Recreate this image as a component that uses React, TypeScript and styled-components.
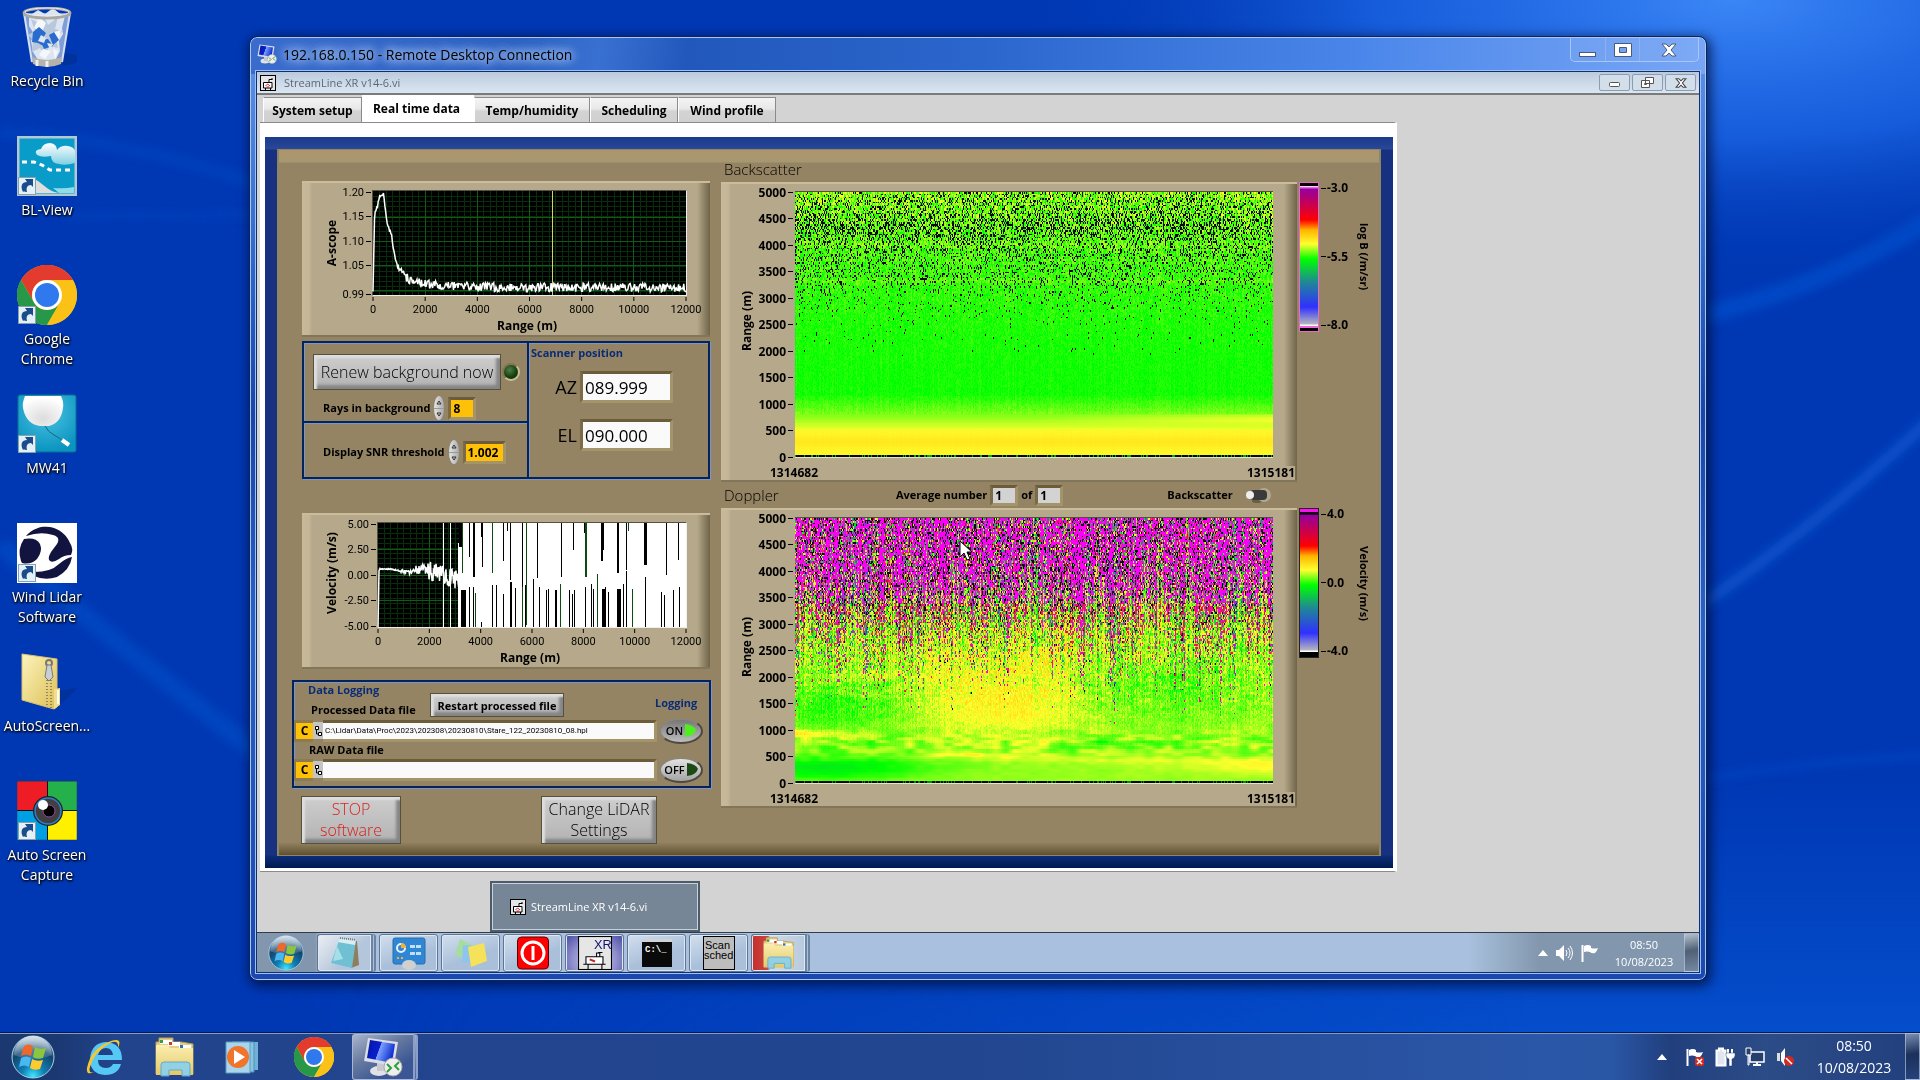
import React, { useLayoutEffect, useRef } from "react";
import styled, { createGlobalStyle, css } from "styled-components";

const UI = '"Open Sans", "Noto Sans", sans-serif';
const NARROW = 'Roboto, "Noto Sans", sans-serif';

const Global = createGlobalStyle`
  *, *::before, *::after { box-sizing: border-box; }
  html, body { margin: 0; background: #0038b4; }
  body { font-family: ${UI}; font-size: 12px; color: #000; }
  button, input { font-family: inherit; margin: 0; padding: 0; }
  svg { display: block; flex: none; }
`;

/* ---------- numeric helpers ---------- */

const hash = (x: number, y: number, s = 0) => {
  let n = Math.imul(x | 0, 374761393) ^ Math.imul(y | 0, 668265263) ^ Math.imul(s + 11, 2147483647);
  n = Math.imul(n ^ (n >>> 13), 1274126177);
  n = Math.imul(n ^ (n >>> 15), 2246822519);
  return ((n ^ (n >>> 16)) >>> 0) / 4294967296;
};
const ease = (t: number) => t * t * (3 - 2 * t);
const smooth = (x: number, y: number, s = 0) => {
  const xi = Math.floor(x);
  const yi = Math.floor(y);
  const fx = ease(x - xi);
  const fy = ease(y - yi);
  const a = hash(xi, yi, s) * (1 - fx) + hash(xi + 1, yi, s) * fx;
  const b = hash(xi, yi + 1, s) * (1 - fx) + hash(xi + 1, yi + 1, s) * fx;
  return a * (1 - fy) + b * fy;
};
const clamp = (v: number, lo = 0, hi = 1) => Math.max(lo, Math.min(hi, v));
const bump = (x: number, c: number, w: number) => Math.exp(-(((x - c) / w) ** 2));

const STOPS: [number, number[]][] = [
  [0, [195, 195, 195]],
  [0.13, [50, 50, 255]],
  [0.25, [35, 115, 180]],
  [0.37, [15, 190, 80]],
  [0.48, [0, 255, 0]],
  [0.59, [255, 255, 45]],
  [0.69, [255, 190, 0]],
  [0.77, [255, 0, 0]],
  [1, [150, 0, 165]],
];
const ramp = (v: number) => {
  const t = clamp(v);
  for (let i = 1; i < STOPS.length; i++) {
    if (t <= STOPS[i][0]) {
      const [p0, c0] = STOPS[i - 1];
      const [p1, c1] = STOPS[i];
      const f = (t - p0) / (p1 - p0);
      return c0.map((c, k) => c + (c1[k] - c) * f);
    }
  }
  return STOPS[STOPS.length - 1][1];
};
const BLACK = [8, 8, 8];
const MAGENTA = [250, 0, 245];

type Cell = (col: number, row: number, cols: number, rows: number) => number[];

const backscatterCell: Cell = (c, r, cols, rows) => {
  const h = 5000 * (1 - (r + 0.5) / rows);
  const x = c / cols;
  if (r === rows - 1) return hash(c, 3, 9) > 0.25 ? BLACK : [0, 170, 30];
  const steps: [number, number][] = [[0, 0], [1900, 0], [2100, 0.01], [2500, 0.015], [3000, 0.06], [3500, 0.16], [4000, 0.23], [4200, 0.36], [4400, 0.32], [5000, 0.17]];
  let p = 0;
  for (let i = 1; i < steps.length; i++)
    if (h <= steps[i][0] && h > steps[i - 1][0])
      p = steps[i - 1][1] + ((steps[i][1] - steps[i - 1][1]) * (h - steps[i - 1][0])) / (steps[i][0] - steps[i - 1][0]);
  p *= 0.75 + 0.5 * hash(1, r, 4);
  if (hash(c, r, 1) < p) return BLACK;
  let v = 0.485;
  if (h < 500) v = 0.6 + 0.022 * bump(h, 280, 120) + 0.004 * hash(c, 0, 2);
  else if (h < 820) v = 0.585 - ((h - 500) / 320) * 0.055 + 0.035 * bump(h, 720, 90) * clamp((x - 0.5) * 2);
  else if (h < 1150) v = 0.53 - ((h - 820) / 330) * 0.04;
  if (h > 820) {
    const t = clamp((h - 1300) / 3700);
    v += (hash(c, r, 7) - 0.42) * (0.025 + 0.12 * t * t) + t * t * 0.045 + (hash(c, 0, 5) - 0.5) * 0.014;
    v += 0.02 * bump(h, 3320, 40) + 0.014 * bump(h, 4000, 60);
  }
  return ramp(v);
};

const dopplerCell: Cell = (c, r, cols, rows) => {
  const h = 5000 * (1 - (r + 0.5) / rows);
  const x = c / cols;
  if (r === rows - 1) return hash(c, 3, 9) > 0.2 ? BLACK : [0, 140, 30];
  const colA = hash(c >> 1, 0, 21) * 0.6 + hash(c, 0, 24) * 0.4;
  const colB = smooth(c / 14, 0, 22);
  const t = clamp((h + (colA - 0.5) * 2200 + (colB - 0.5) * 500 - 2050) / 1650);
  if (hash(c, r, 31) < Math.pow(t, 1.1) * 0.94) {
    const k = hash(c, r, 32);
    const m = 0.42 + 0.18 * clamp((h - 2600) / 1400) + (hash(c >> 1, 1, 23) - 0.5) * 0.65;
    if (k < m) return h < 3400 && hash(c, r, 36) > 0.4 ? [225, 20, 110] : MAGENTA;
    if (k < m + 0.05 + 0.16 * clamp((h - 2700) / 1000)) return BLACK;
    return ramp(0.12 + 0.8 * (hash(c, r, 33) * 0.6 + hash(c, 4, 38) * 0.4));
  }
  let v = 0.545;
  v -= 0.09 * bump(x, 0.06, 0.22) * bump(h, 290, 230);
  v -= 0.05 * bump(x, 0.08, 0.16) * bump(h, 1450, 420);
  v += 0.065 * bump(x, 0.42, 0.17) * bump(h, 1550, 700);
  v += 0.03 * bump(x, 0.5, 0.35) * bump(h, 2500, 500);
  v += 0.05 * bump(x, 1, 0.2) * bump(h, 330, 160);
  v -= 0.05 * bump(x, 0.68, 0.12) * bump(h, 740, 50);
  v -= 0.03 * bump(x, 0.78, 0.16) * bump(h, 1900, 800);
  v += 0.06 * bump(x, 0, 0.1) * bump(h, 930, 60);
  v += 0.05 * bump(x, 0.38, 0.16) * bump(h, 520, 70);
  v += 0.03 * bump(x, 0.72, 0.2) * bump(h, 430, 60);
  const cloud = smooth(x * 14, h / 110, 41) * 0.4 + smooth(x * 50, h / 60, 42) * 0.6 - 0.5;
  v += cloud * (0.02 + 0.12 * bump(h, 720, 250) + 0.05 * clamp((h - 1000) / 800));
  const g = clamp((h - 500) / 2500);
  v += (hash(c, r, 34) - 0.5) * 0.16 * g + (hash(c, 2, 35) - 0.5) * 0.09 * g;
  return ramp(v);
};

/* ---------- icons ---------- */

const ShortcutMark = () => (
  <g>
    <rect x="1.5" y="41.5" width="17" height="17" fill="#e2f1f8" stroke="#8aa0ac" />
    <path d="M6 56C3 50 5 46 10 46l-2-3h8v8l-2-2c-4 0-5 3-4 7-2 0-3-1-4 0z" fill="#1c4b8c" />
  </g>
);
const ChromeArt = () => (
  <g>
    <circle cx="30" cy="30" r="30" fill="#fbc116" />
    <path d="M4 15A30 30 0 0 1 56 15H30A15 15 0 0 0 17 37.500Z" fill="#e33b2e" />
    <path d="M4 15 17 37.500A15 15 0 0 0 43 37.500L30 60A30 30 0 0 1 4 15Z" fill="#27984a" />
    <path d="M56 15A30 30 0 0 1 30 60L43 37.500A15 15 0 0 0 43 22.500L40 15Z" fill="#fbc116" />
    <circle cx="30" cy="30" r="15" fill="#fff" />
    <circle cx="30" cy="30" r="12" fill="#2f78ee" />
  </g>
);
const Chrome = ({ size, shortcut }: { size: number; shortcut?: boolean }) => (
  <svg width={size} height={size} viewBox="0 0 60 60"><ChromeArt />{shortcut && <ShortcutMark />}</svg>
);
const RecycleBin = () => (
  <svg width="60" height="60" viewBox="0 0 60 60">
    <ellipse cx="48" cy="52" rx="14" ry="6" fill="#002a86" opacity=".5" />
    <path d="M7 6 15 55Q30 62 45 55L53 6Z" fill="#a9bfe6" opacity=".75" />
    <path d="m12 9 9-6 7 4 8-6 6 5 6 3-3 12 1 6-4 7 1 10-4 8-9 4-9-3-5-8-2-11 3-7-5-8z" fill="#dde6f0" />
    <path d="m14 12 8 4 5-8 4 10 10-8-3 12 8 2-7 6 2 11-9-2-3 11-6-9-8 4 1-12-5-5 7-4z" fill="#b9c8da" />
    <path d="m22 10 7 6-4 9-8-4zM34 26l10-3-3 12zM26 42l8 2-6 8-6-4zM36 42l5 2-3 8z" fill="#f4f7fa" />
    <path d="m16 25 6-5 7 6-3 5 5 6-3 3-7-4-6-1zM32 28l5-3 5 8-6 5zM23 33l8-1 5 7-9 3z" fill="#2a6bd0" />
    <path d="m24 28 5 3-2 5-6-2zM30 36l6 1-3 5z" fill="#dde6f0" />
    <path d="M7 6 15 55M53 6 45 55" stroke="#d5e0f2" strokeWidth="2" />
    <ellipse cx="30" cy="6" rx="23" ry="5" fill="none" stroke="#a8a8a4" strokeWidth="3" />
    <ellipse cx="30" cy="5" rx="22" ry="4" fill="none" stroke="#eee" />
    <path d="M15 50Q30 56 45 50L44 57Q30 63 16 57Z" fill="#b5b3ac" />
    <path d="M20 53v6M30 54v6" stroke="#eee" strokeWidth="3" />
  </svg>
);
const BlView = () => (
  <svg width="60" height="60" viewBox="0 0 60 60">
    <defs><linearGradient id="cl" x1="0" y1="0" x2="0" y2="1"><stop offset="0" stopColor="#fff" /><stop offset="1" stopColor="#7fcfe2" /></linearGradient></defs>
    <rect x="1" y="1" width="58" height="58" fill="#0a9cc8" stroke="#b3c9d2" strokeWidth="3" />
    <path d="M20 19q-4-5 4-6 2-6 9-6 7 1 7 7 4-5 11-4 6 1 7 5v12q-10 3-16 1-8-1-8-8-9 2-14-1z" fill="url(#cl)" />
    <path d="M5 26h12l8 3 8 5h24" fill="none" stroke="#fff" strokeWidth="3" strokeDasharray="5 4" />
    <path d="M3 42q12-1 18 3l9 7q5 4 12 5H3z" fill="#dedede" />
    <path d="M36 52q12 1 21-1v6H42z" fill="#8fdbe9" />
    <ShortcutMark />
  </svg>
);
const Mw41 = () => (
  <svg width="60" height="60" viewBox="0 0 60 60">
    <defs>
      <radialGradient id="mwb" cx=".5" cy=".3" r=".7"><stop offset="0" stopColor="#4cc3e2" /><stop offset="1" stopColor="#0a94c0" /></radialGradient>
      <radialGradient id="mwo" cx=".5" cy=".75" r=".7"><stop offset="0" stopColor="#dcdcdc" /><stop offset="1" stopColor="#fff" /></radialGradient>
    </defs>
    <rect x="1" y="1" width="58" height="57" rx="2" fill="url(#mwb)" stroke="#0b6f92" />
    <path d="M8 2Q5 9 6 14 9 30 23 32h9Q44 29 46 14 47 8 44 2Z" fill="url(#mwo)" />
    <path d="M28 32Q31 38 37 41T47 48" fill="none" stroke="#166880" />
    <path d="m45 46 7 5" stroke="#fff" strokeWidth="4" />
    <ShortcutMark />
  </svg>
);
const WindLidar = () => (
  <svg width="60" height="60" viewBox="0 0 60 60">
    <rect width="60" height="60" fill="#fff" />
    <path d="M9 13A26 26 0 0 1 53 20Q57 26 54 32 47 32 42 36 36 40 33 38 30 36 34 29L40 21Q44 14 36 12 24 8 9 13Z" fill="#12133f" />
    <path d="M4 38Q0 26 7 16 19 14 23 21 26 28 20 36 14 42 5 40Z" fill="#12133f" />
    <path d="M17 49Q34 49 42 41 49 35 55 34 53 47 40 54 28 58 17 53Z" fill="#12133f" />
    <ShortcutMark />
  </svg>
);
const ZipFolder = () => (
  <svg width="60" height="60" viewBox="0 0 60 60">
    <defs><linearGradient id="zf" x1="0" y1="0" x2="1" y2="1"><stop offset="0" stopColor="#fdf4bd" /><stop offset="1" stopColor="#dcbf55" /></linearGradient></defs>
    <path d="M36 40 60 36Q50 48 38 56z" fill="#012b86" opacity=".55" />
    <path d="M5 2 40 7V55L37 57 5 48Z" fill="url(#zf)" stroke="#d8c06a" />
    <path d="M37 37l6-1v17l-6 4z" fill="#f2dd88" />
    <path d="M40 38h2v14h-2z" fill="#fff" />
    <path d="M30 28V56M34 28V57" stroke="#8c8568" strokeWidth="2" strokeDasharray="1 2" />
    <circle cx="32" cy="11" r="3" fill="none" stroke="#777" strokeWidth="2" />
    <path d="m30 13 4 0 2 12-4 4-4-4z" fill="#c9ced2" stroke="#747b80" />
  </svg>
);
const AutoCapture = () => (
  <svg width="60" height="60" viewBox="0 0 60 60">
    <path d="M0 0h30v30H0z" fill="#ee1c25" /><path d="M31 0h29v29H31z" fill="#24b04b" />
    <path d="M0 30h30v29H0z" fill="#009fe3" /><path d="M31 30h29v29H31z" fill="#fff000" />
    <path d="M30.500 0v59M0 29.500h60" stroke="#111" />
    <path d="M0 .5h60v58.500H0z" fill="none" stroke="#333" opacity=".5" />
    <circle cx="31" cy="30" r="15" fill="#222" /><circle cx="31" cy="30" r="13" fill="#404040" stroke="#2d7fd0" strokeWidth="1.500" />
    <circle cx="32" cy="30" r="6" fill="#000" stroke="#a044a0" />
    <circle cx="26" cy="24" r="5" fill="#fff" />
    <ShortcutMark />
  </svg>
);
const Orb = ({ size }: { size: number }) => (
  <svg width={size} height={size} viewBox="0 0 44 44">
    <defs>
      <radialGradient id="orb" cx=".5" cy=".95" r=".9"><stop offset="0" stopColor="#3fe6ff" /><stop offset=".3" stopColor="#0f7fb4" /><stop offset=".7" stopColor="#12456e" /><stop offset="1" stopColor="#7fa3bd" /></radialGradient>
      <linearGradient id="orbs" x1="0" y1="0" x2="0" y2="1"><stop offset="0" stopColor="#fff" stopOpacity=".65" /><stop offset="1" stopColor="#fff" stopOpacity=".1" /></linearGradient>
    </defs>
    <circle cx="22" cy="22" r="21" fill="url(#orb)" stroke="#a9cfe2" />
    <path d="M3 20A19 19 0 0 1 41 20Q22 28 3 20Z" fill="url(#orbs)" />
    <path d="M13 11q5-3 9 0l-2 10q-5-3-10 0z" fill="#f0672c" />
    <path d="M24 12q4 3 11 1l-3 10q-6 2-10-1z" fill="#8cc63e" />
    <path d="M10 23q5-3 10 0l-2 9q-5-3-10 0z" fill="#4cb6f0" />
    <path d="M21 24q5 3 11 1l-3 9q-6 2-10-1z" fill="#fdcb2e" />
  </svg>
);
const Explorer = ({ size }: { size: number }) => (
  <svg width={size} height={size} viewBox="0 0 40 40">
    <defs><linearGradient id="exf" x1="0" y1="0" x2="0" y2="1"><stop offset="0" stopColor="#fbeeb0" /><stop offset="1" stopColor="#e3c968" /></linearGradient></defs>
    <path d="M1 5h3V1h14v4h8l12 2v30H1z" fill="#e4cf84" stroke="#b8a050" />
    <path d="M5 3h12v4H5zM13 5h12v4H13zM24 8h12v3H24z" fill="#fff" />
    <path d="M5 3h3v3H5z" fill="#3a9a3e" /><path d="M14 5h3v3h-3z" fill="#cf3d20" /><path d="M25 8h3v3h-3z" fill="#2b72b8" />
    <path d="M1 8h12l2 3h23v27H1z" fill="url(#exf)" />
    <path d="M6 39V28q0-3 3-3h23q3 0 3 3v11h-8v-6H14v6z" fill="#8fd0ea" stroke="#5aa9cc" opacity=".95" />
  </svg>
);
const InternetExplorer = () => (
  <svg width="38" height="38" viewBox="0 0 38 38">
    <path d="M37 22H13q0 8 8 8 5 0 7-4h8q-3 11-16 11Q5 36 5 21 6 5 21 4q16 1 16 18zM13 17h15q-1-7-7-7t-8 7z" fill="#55c8f6" />
    <path d="M33 10Q38-1 26 3 6 10 2 30q-1 8 7 4Q3 36 5 29 9 14 25 5q9-4 8 5z" fill="#f7c82d" />
  </svg>
);
const MediaPlayer = () => (
  <svg width="34" height="34" viewBox="0 0 34 34">
    <path d="M12 2h21v28H12z" fill="#6fb2d6" /><path d="M7 2h22v30H7z" fill="#8ac4e2" stroke="#4f91b6" />
    <path d="M1 2h24v31H1z" fill="#a8d5ec" stroke="#5b9cc0" />
    <circle cx="13" cy="17" r="11" fill="#f0742a" /><path d="M9 10v14l11-7z" fill="#fff" />
  </svg>
);
const RemoteDesktop = ({ size }: { size: number }) => (
  <svg width={size} height={size} viewBox="0 0 40 40">
    <defs><linearGradient id="rds" x1="0" y1="0" x2="1" y2=".3"><stop offset="0" stopColor="#0414a0" /><stop offset=".5" stopColor="#0a20d0" /><stop offset=".52" stopColor="#7da2ff" /><stop offset="1" stopColor="#1232d0" /></linearGradient></defs>
    <ellipse cx="16" cy="34" rx="9" ry="5" fill="#e2e2e6" /><path d="M14 26h7l1 8h-8z" fill="#c8c8ce" />
    <path d="M5 1 35 5 31 29 1 24Z" fill="#d9dde6" /><path d="M7 3 32 7 29 26 4 21Z" fill="url(#rds)" />
    <circle cx="30" cy="30" r="9" fill="#eee" stroke="#aaa" />
    <path d="m24 27 4 4-4 4M36 25l-4 4 4 4" fill="none" stroke="#2f9e38" strokeWidth="2" />
  </svg>
);
const Notepad = () => (
  <svg width="32" height="32" viewBox="0 0 32 32">
    <path d="m12 2 16 2 2 24-8 3z" fill="#8f7d5c" /><path d="M11 1 27 3 23 31 2 26Z" fill="#6fc0d2" />
    <path d="M11 1 27 3 26 8 9 5Z" fill="#d8eef2" /><path d="M11 1 27 3" stroke="#777" strokeWidth="2" strokeDasharray="1 1" />
    <path d="M8 9 14 22 4 24Z" fill="#a7dfe8" />
  </svg>
);
const ControlPanel = () => (
  <svg width="34" height="34" viewBox="0 0 34 34">
    <rect x="1" y="2" width="32" height="26" rx="2" fill="#2f86d4" stroke="#2a6ca8" />
    <circle cx="9" cy="12" r="4" fill="none" stroke="#e6f2fb" strokeWidth="2" /><path d="M9 7a5 5 0 0 1 5 5H9z" fill="#f5b131" />
    <path d="M18 9h5v3h-5zM24 9h5v3h-5zM18 16h5v3h-5zM24 16h5v3h-5z" fill="#bfe0f8" /><path d="M5 21h2v2H5zM9 21h2v2H9z" fill="#f5b131" /><ellipse cx="17" cy="29" rx="7" ry="5" fill="#d0d0d0" />
  </svg>
);
const StickyNotes = () => (
  <svg width="34" height="30" viewBox="0 0 34 30">
    <path d="m6 1 16 8-4 14L1 17Z" fill="#a6dc9c" /><path d="m9 7 17 1-1 17-17-1z" fill="#8ec5ee" /><path d="m14 9 16-4 3 18-16 6z" fill="#f6e15a" />
  </svg>
);
const PowerTile = () => (
  <svg width="32" height="34" viewBox="0 0 32 34">
    <rect x=".5" y="1" width="31" height="32" rx="4" fill="#f00" stroke="#600" /><circle cx="16" cy="17" r="11" fill="none" stroke="#fff" strokeWidth="3" /><path d="M16 10v14" stroke="#fff" strokeWidth="3" />
  </svg>
);
const ViGlyph = ({ size, label }: { size: number; label?: boolean }) => (
  <svg width={size} height={size} viewBox="0 0 32 32">
    <rect x={label ? 0.5 : 1} y={label ? 0.5 : 1} width={label ? 31 : 30} height={label ? 31 : 30} fill="#e6e6e6" stroke="#000" strokeWidth={label ? 1 : 2} />
    {label ? (
      <>
        <text x="15" y="12" fontFamily="Liberation Sans" fontSize="12" fill="#10107a">XR</text>
        <path d="M7.500 19.500h16v7h-16zM5 26.500h5M21 26.500h5M9.500 31v-4M22.500 31v-4M17.500 19v-3h3v3M19 15.500h4" fill="#fff" stroke="#000" /><path d="m11 22 5 2" stroke="#c22" strokeWidth="2" />
      </>
    ) : (
      <>
        <path d="M7 15h17v11H7zM11 31v-5M21 31v-5M18 14V9h7M24 9V6" fill="#fff" stroke="#000" strokeWidth="2" /><path d="m11 22 4-4 5 4M13 24h5" stroke="#c22" strokeWidth="2" fill="none" />
      </>
    )}
  </svg>
);
const Cmd = () => (
  <svg width="30" height="28" viewBox="0 0 30 28">
    <rect width="30" height="28" fill="#0a0a0a" /><path d="M0 0h30v3H0z" fill="#cfd3d8" />
    <text x="3" y="13" fontFamily="Liberation Mono" fontWeight="700" fontSize="9" fill="#fff">C:\_</text>
  </svg>
);
const ScanSched = () => (
  <svg width="32" height="34" viewBox="0 0 32 34">
    <rect x=".5" y=".5" width="31" height="33" fill="#bdbdbd" stroke="#000" />
    <text x="2" y="13" fontFamily="Liberation Sans" fontSize="11" fill="#000">Scan</text>
    <text x="1" y="23" fontFamily="Liberation Sans" fontSize="11" fill="#000">sched</text>
  </svg>
);
const TrayArrow = () => <svg width="10" height="6" viewBox="0 0 10 6"><path d="M0 6 5 0l5 6z" fill="#fff" /></svg>;
const TrayFlag = ({ error }: { error?: boolean }) => (
  <svg width="20" height="20" viewBox="0 0 20 20">
    <path d="M2.500 2v17" stroke="#fff" strokeWidth="2" /><path d="M4 3q4-2 7 0v2q3 1 7 0-1 3-3 5-3 1-5-1-3-1-6 0z" fill="#fff" />
    {error && <><rect x="10" y="10" width="9" height="9" rx="2" fill="#d22a22" /><path d="m12 12 5 5M17 12l-5 5" stroke="#fff" strokeWidth="1.500" /></>}
  </svg>
);
const TrayBattery = () => (
  <svg width="20" height="20" viewBox="0 0 20 20"><path d="M1.500 3.500H4v-2h4v2h2.500v15h-9z" fill="#dfe6f0" stroke="#fff" strokeWidth="2" /><path d="M13 2v4M17 2v4" stroke="#fff" strokeWidth="2" /><path d="M11 6h9v3q-1 3-3 3v7h-3v-7q-2 0-3-3z" fill="#fff" stroke="#26406e" strokeWidth=".5" /></svg>
);
const TrayNetwork = () => (
  <svg width="20" height="20" viewBox="0 0 20 20"><path d="M5 5h14v10H5z" fill="#26406e" stroke="#fff" strokeWidth="1.500" /><path d="M8 17h8v2H8zM11 15h2v2h-2z" fill="#fff" /><path d="M1 1h5v7H1zM3 8h1v10H3z" fill="#26406e" stroke="#fff" /></svg>
);
const TrayVolume = ({ muted }: { muted?: boolean }) => (
  <svg width="20" height="20" viewBox="0 0 20 20">
    {muted ? (
      <><path d="M2 6h3v8H2z" fill="#ddd" /><path d="M6 6l4-5v18l-4-5z" fill="#fff" /><circle cx="14" cy="14" r="5" fill="#d22a22" /><path d="m11 11 6 6" stroke="#fff" strokeWidth="1.500" /></>
    ) : (
      <><path d="M2 7h3l5-5v16l-5-5H2z" fill="#fff" /><path d="M12 7q2 3 0 6M14 5q4 5 0 10M16 3q5 7 0 14" fill="none" stroke="#fff" /></>
    )}
  </svg>
);

const Wallpaper = styled.svg`
  position: absolute;
  inset: 0;
  width: 100%;
  height: 100%;
`;

/* ---------- desktop shell ---------- */

const Desktop = styled.div`
  position: relative;
  display: flex;
  flex-direction: column;
  min-height: 100vh;
  overflow: hidden;
  background: #0038b4;
`;
const Workspace = styled.main`
  position: relative;
  flex: 1;
`;
const IconColumn = styled.nav`
  position: relative;
  display: grid;
  grid-auto-rows: 129px;
  width: 94px;
  padding-top: 7px;
`;
const DesktopIcon = styled.button`
  display: flex;
  flex-direction: column;
  align-items: center;
  gap: 4px;
  border: 0;
  background: none;
  color: #fff;
  font-size: 14px;
  line-height: 20px;
  text-shadow: 1px 1px 2px #000, 0 1px 3px #000;
`;

const WindowFrame = styled.section`
  position: absolute;
  inset: 37px 214px 52px 250px;
  display: flex;
  flex-direction: column;
  padding: 0 6px 7px;
  border: 1px solid #a8c6f5;
  border-radius: 7px;
  outline: 1px solid #0a2560;
  background: linear-gradient(100deg, transparent 18%, rgba(90, 150, 240, .35) 24%, transparent 30%) no-repeat 0 0 / 100% 34px,
    linear-gradient(90deg, #3a6cce 0, #2258bc 30%, #2b66cc 50%, #4a86ea 76%, #78a6f5 100%) no-repeat 0 0 / 100% 36px,
    linear-gradient(180deg, #5f95ec 0, #2d64c8 25%, #1a45a8 40%, #2a60c4 62%, #1b48ae 100%);
  box-shadow: 2px 3px 12px 3px rgba(0, 10, 50, .7);
`;
const WindowTitle = styled.header`
  display: flex;
  height: 34px;
  flex: none;
`;
const Caption = styled.h1`
  display: flex;
  align-items: center;
  gap: 6px;
  margin: 0;
  padding-bottom: 2px;
  font-size: 14px;
  font-weight: 400;
  text-shadow: 0 0 8px #b9d0f5, 0 0 10px #b9d0f5, 0 0 14px #9fbef0, 0 0 14px #9fbef0;
`;
const CaptionButtons = styled.div`
  display: flex;
  height: 24px;
  margin-left: auto;
  border: 1px solid #a9c6f8;
  border-top: 0;
  border-radius: 0 0 5px 5px;
`;
const CaptionButton = styled.button<{ $wide?: boolean }>`
  display: grid;
  place-items: center;
  width: ${(p) => (p.$wide ? 59 : 34)}px;
  border: 0;
  border-left: 1px solid #8fb2ee;
  background: rgba(160, 195, 250, .15);
  &:first-child { border-left: 0; }
`;
const Client = styled.div`
  position: relative;
  display: flex;
  flex: 1;
  flex-direction: column;
  background: #d3d3d3;
  box-shadow: 0 0 0 1px #10306e, 0 0 0 2px #9fc0f4;
`;
const MdiTitle = styled.header`
  display: flex;
  align-items: center;
  gap: 8px;
  height: 23px;
  flex: none;
  padding: 0 3px;
  border-bottom: 2px solid #7b7b7b;
  background: linear-gradient(#bccbdc, #dbe6f3);
  color: #5c6878;
  font-size: 11px;
`;
const MdiButtons = styled.div`
  display: flex;
  gap: 2px;
  margin-left: auto;
`;
const MdiButton = styled.button`
  display: grid;
  place-items: center;
  width: 31px;
  height: 17px;
  border: 1px solid #8d9cb0;
  border-radius: 2px;
  background: #d3deeb;
`;
const Tabs = styled.div`
  display: flex;
  align-items: flex-end;
  height: 27px;
  flex: none;
  padding-left: 6px;
`;
const Tab = styled.button<{ $w: number; $active?: boolean }>`
  width: ${(p) => p.$w}px;
  height: 25px;
  border: 1px solid #8a8a8a;
  border-bottom: 0;
  border-left-color: #fff;
  background: linear-gradient(#f4f4f4, #e8e8e8 45%, #d3d3d3 55%, #d0d0d0);
  font-size: 12px;
  font-weight: 700;
  white-space: nowrap;
  ${(p) => p.$active && css`
    height: 27px;
    padding: 0 3px 2px 0;
    border-color: #fff;
    background: #fff;
  `}
`;
const TabPage = styled.div`
  align-self: flex-start;
  margin-left: 3px;
  padding: 14px 1px 3px 5px;
  border-top: 1px solid #8a8a8a;
  border-right: 3px double #fff;
  border-bottom: 1px solid #8a8a8a;
  background: #fff;
`;
const BlueBezel = styled.div`
  padding: 12px;
  background: linear-gradient(#1a3a8c 0, #2a4798 12px, transparent 13px), linear-gradient(0deg, #001a50 0, #0c2c78 12px, #183080 13px);
`;
const Panel = styled.div`
  display: grid;
  grid-template-columns: 442px 658px;
  height: 707px;
  border: 1px solid #8f8466;
  border-width: 1px 2px;
  background: linear-gradient(#ad956c 0, #a79870 12px, transparent 13px), linear-gradient(0deg, #5e5031 0, #948463 13px);
`;

/* ---------- front panel parts ---------- */

const Left = styled.div`
  display: flex;
  flex-direction: column;
  padding: 31px 11px 0 13px;
`;
const Right = styled.div`
  display: flex;
  flex-direction: column;
`;
const plate = css`
  background: linear-gradient(90deg, #c7b999 0, #c4b696 7px, #b6a98b 10px, #b6a98b calc(100% - 13px), #6f6449 100%);
  border-top: 2px solid #cbbd9c;
  border-bottom: 2px solid #82765a;
`;
const ScopePlate = styled.figure`
  ${plate}
  height: 156px;
  margin: 0 0 0 10px;
`;
const Axis = styled.text`
  font-family: ${NARROW};
  font-size: 11px;
`;
const AxisTitle = styled.text`
  font-family: ${UI};
  font-size: 12px;
  font-weight: 700;
  text-anchor: middle;
`;

const boxed = css`
  border: 2px solid #04225c;
  box-shadow: inset 1px 1px 0 #7f96c0, 1px 1px 0 #7f96c0;
`;
const ControlBox = styled.div`
  ${boxed}
  display: grid;
  grid-template-columns: 225px 1fr;
  grid-template-rows: 80px 1fr;
  height: 138px;
  margin: 4px 0 34px 10px;
`;
const BackgroundCell = styled.div`
  padding: 11px 0 0 9px;
  border-right: 2px solid #04225c;
  border-bottom: 2px solid #04225c;
  box-shadow: inset -1px 0 0 #948463, 0 1px 0 #7f96c0;
`;
const SnrCell = styled.div`
  padding: 16px 0 0 19px;
  border-right: 2px solid #04225c;
`;
const ScannerCell = styled.div`
  grid-row: 1 / 3;
  grid-column: 2;
  padding: 2px 0 0 1px;
  border-left: 1px solid #7f96c0;
`;
const Row = styled.div<{ $gap?: number; $pad?: string }>`
  display: flex;
  align-items: center;
  gap: ${(p) => p.$gap ?? 3}px;
  padding: ${(p) => p.$pad ?? "0"};
`;
const Title = styled.h2`
  margin: 0;
  color: #0a2c78;
  font-size: 11px;
  font-weight: 700;
  line-height: 16px;
`;
const BoldLabel = styled.label`
  font-size: 11px;
  font-weight: 700;
  line-height: 16px;
  white-space: nowrap;
`;
const BigLabel = styled.label`
  width: 30px;
  font-size: 18px;
  line-height: 32px;
  text-align: right;
`;
const PanelButton = styled.button<{ $w: number; $h: number; $bold?: boolean; $red?: boolean }>`
  width: ${(p) => p.$w}px;
  height: ${(p) => p.$h}px;
  border: 1px solid #55513f;
  background: linear-gradient(#cecece, #b2b2b2);
  box-shadow: inset 3px 3px 2px #dedede, inset -4px -4px 3px #858585;
  color: ${(p) => (p.$red ? "#d8201c" : "#000")};
  font-size: ${(p) => (p.$bold ? 11 : 16)}px;
  font-weight: ${(p) => (p.$bold ? 700 : 300)};
  line-height: 21px;
  white-space: pre-line;
`;
const Field = styled.input<{ $w: number; $h: number; $kind: "amber" | "big" | "grey" | "path" }>`
  width: ${(p) => p.$w}px;
  height: ${(p) => p.$h}px;
  padding-left: 2px;
  border: 3px solid;
  border-color: #6c5c3a #a3946c #a3946c #7a6a45;
  border-radius: 0;
  background: ${(p) => ({ amber: "#ffc107", big: "#fafafa", grey: "#d3d3d3", path: "#fafafa" })[p.$kind]};
  font-size: ${(p) => ({ amber: 12, big: 17, grey: 12, path: 8 })[p.$kind]}px;
  font-weight: ${(p) => (p.$kind === "amber" || p.$kind === "grey" ? 700 : 400)};
  outline: 0;
`;
const PathField = styled(Field)`
  flex: 1;
  border-left: 0;
  font-family: ${NARROW};
`;
const SpinBox = styled.span`
  display: grid;
  grid-template-rows: 12px 12px;
  width: 12px;
  overflow: hidden;
  border: 1px solid #8d8674;
  border-radius: 50%;
`;
const SpinButton = styled.button`
  display: grid;
  place-items: center;
  border: 0;
  border-top: 1px solid #999;
  background: linear-gradient(90deg, #e5e5e5, #aaa);
  &:first-child { border-top: 0; }
`;
const Led = styled.span`
  width: 18px;
  height: 18px;
  border: 2px solid #837450;
  border-right-color: #cbbd9a;
  border-bottom-color: #cbbd9a;
  border-radius: 50%;
  background: radial-gradient(circle at 40% 35%, #4f7d4c, #123c08 60%);
`;
const LoggingBox = styled.section`
  ${boxed}
  height: 108px;
  margin: 11px -1px 8px 0;
`;
const LoggingHead = styled.div`
  display: grid;
  grid-template-columns: 122px 134px 1fr;
  height: 37px;
  padding-left: 14px;
`;
const PathRow = styled.div`
  display: flex;
  align-items: center;
  height: 23px;
  margin-right: 6px;
`;
const Drive = styled.button`
  width: 19px;
  height: 22px;
  border: 2px solid #8d7b50;
  border-width: 3px 0 3px 2px;
  background: #ffc107;
  font-size: 12px;
  font-weight: 700;
  line-height: 16px;
`;
const PathGlyph = styled.span`
  display: grid;
  place-items: center;
  width: 10px;
  height: 17px;
  background: #c4c4c4;
`;
const Toggle = styled.button<{ $on?: boolean }>`
  display: flex;
  align-items: center;
  justify-content: center;
  gap: 2px;
  width: 44px;
  height: 26px;
  margin-left: 2px;
  border: 2px solid #5f5a4e;
  border-color: #8b8575 #4d493e #4d493e #8b8575;
  border-radius: 50%;
  background: ${(p) => (p.$on ? "linear-gradient(#777, #bdbdbd)" : "linear-gradient(#e2e2e2, #a4a4a4)")};
  font-size: 11px;
  font-weight: 600;
`;
const FooterButtons = styled.div`
  display: flex;
  gap: 140px;
  padding-left: 9px;
`;

const PlotHeading = styled.div`
  display: flex;
  align-items: center;
  height: 26px;
  padding-left: 3px;
  &:first-child { height: 32px; padding-top: 6px; }
`;
const HeadingText = styled.h2`
  width: 172px;
  margin: 0;
  font-size: 15px;
  font-weight: 300;
`;
const PlotRow = styled.div`
  display: flex;
  height: 300px;
  gap: 2px;
`;
const MapPlate = styled.figure`
  ${plate}
  display: grid;
  grid-template-columns: 33px 41px 478px;
  grid-template-rows: 274px 1fr;
  width: 576px;
  height: 300px;
  margin: 0;
`;
const VerticalTitle = styled.span<{ $down?: boolean }>`
  place-self: center end;
  writing-mode: vertical-rl;
  transform: ${(p) => (p.$down ? "none" : "rotate(180deg)")};
  font-size: ${(p) => (p.$down ? 11 : 12)}px;
  font-weight: 700;
  line-height: 14px;
  white-space: nowrap;
`;
const TickColumn = styled.ul`
  display: flex;
  flex-direction: column;
  justify-content: space-between;
  height: 280px;
  margin: 0 0 0 -6px;
  padding: 1px 0 0;
  list-style: none;
`;
const Tick = styled.li`
  display: flex;
  align-items: center;
  justify-content: flex-end;
  gap: 2px;
  height: 14px;
  padding-right: 2px;
  font-size: 12px;
  font-weight: 700;
  &::after { content: ""; width: 5px; height: 1px; background: #000; }
`;
const MapArea = styled.div`
  position: relative;
  height: 267px;
  margin-top: 7px;
  border-top: 1px solid #55503f;
  border-bottom: 1px solid #e8e4c8;
`;
const MapCanvas = styled.canvas`
  display: block;
  width: 478px;
  height: 265px;
  image-rendering: pixelated;
`;
const Pointer = styled.svg`
  position: absolute;
  left: 164px;
  top: 22px;
`;
const XLabels = styled.figcaption`
  grid-column: 1 / 4;
  display: flex;
  justify-content: space-between;
  width: 574px;
  padding: 8px 0 0 49px;
  font-size: 12px;
  font-weight: 700;
  line-height: 14px;
`;
const XLabel = styled.span`
  background: #b6a98b;
`;
const ScaleBar = styled.div<{ $doppler?: boolean }>`
  width: 20px;
  height: 150px;
  border: 1px solid ${(p) => (p.$doppler ? "#222" : "#e86ad0")};
  background: linear-gradient(${(p) => (p.$doppler
    ? "#fa10f0 0, #fa10f0 3px, #000 3px, #400040 6px,"
    : "#000 0, #000 3px, #f4d8ee 3px, #f4d8ee 4px, #ee66dd 4px, #ee66dd 5px,")}
    #9400a0 6px, #f00 37px, #ffb400 47px, #ffff30 61px, #0f0 76px, #1e8c90 98px, #3030ff 124px, #b4b4c0 141px,
    ${(p) => (p.$doppler ? "#fff 142px, #fff 143px, #000 143px" : "#fff 142px, #fff 143px, #ee66dd 143px, #ee66dd 145px, #000 145px")});
`;
const ScaleTicks = styled.ul`
  display: flex;
  flex-direction: column;
  justify-content: space-between;
  width: 34px;
  height: 149px;
  margin: 0;
  padding: 0;
  list-style: none;
`;
const ScaleTick = styled.li`
  display: flex;
  align-items: center;
  gap: 1px;
  height: 12px;
  font-size: 12px;
  font-weight: 700;
  line-height: 12px;
  white-space: nowrap;
  &::before { content: ""; width: 5px; height: 1px; background: #000; }
`;
const ScaleTitle = styled.div`
  display: grid;
  place-items: center;
  height: 150px;
`;
const Lever = styled.button`
  width: 26px;
  height: 16px;
  border: 0;
  background: none;
`;

/* ---------- task bars ---------- */

const InnerPreview = styled.button`
  position: absolute;
  left: 233px;
  bottom: 40px;
  display: flex;
  align-items: center;
  gap: 5px;
  width: 210px;
  height: 51px;
  padding-left: 18px;
  border: 2px solid #4e5b68;
  border-radius: 0;
  box-shadow: inset 0 0 0 1px #c4d2e0;
  background: #768696;
  color: #fff;
  font-size: 11px;
`;
const InnerBar = styled.footer`
  display: flex;
  align-items: center;
  gap: 3px;
  height: 40px;
  margin-top: auto;
  border-top: 1px solid #333c48;
  background: linear-gradient(90deg, #8297ae 0, #8297ae 58px, #a9c1de 64px, #a9c1de 84%, #8297ad 89%, #8297ad 100%);
  color: #fff;
`;
const StartButton = styled.button<{ $w: number }>`
  display: grid;
  place-items: center;
  width: ${(p) => p.$w}px;
  height: 100%;
  border: 0;
  background: none;
`;
const TaskButton = styled.button<{ $look?: "stack" | "active" | "progress" }>`
  display: grid;
  place-items: center;
  width: 59px;
  height: 38px;
  border: 1px solid #5f7590;
  border-radius: 3px;
  box-shadow: inset 0 0 0 1px #dce8f5;
  background: linear-gradient(160deg, #d2dfee, #a9bfda 60%);
  ${(p) => p.$look === "active" && css`background: radial-gradient(ellipse at 50% 70%, #d5d5f4 0, #8f90cc 55%, #4546a0 100%);`}
  ${(p) => p.$look === "stack" && css`border-right: 5px double #6d84a0; background: linear-gradient(135deg, #eceff3, #b4c6dc 60%) padding-box;`}
  ${(p) => p.$look === "progress" && css`border-right: 5px double #6d84a0; background: linear-gradient(90deg, #c4302c 0, #cc4440 30%, #cfdbe8 34%, #b8cade 100%) padding-box;`}
`;
const Tray = styled.div<{ $gap: number; $lead?: number }>`
  display: flex;
  align-items: center;
  align-self: stretch;
  gap: ${(p) => p.$gap}px;
  margin-left: auto;
  padding-left: ${(p) => p.$lead ?? 0}px;
`;
const Clock = styled.time<{ $big?: boolean }>`
  display: grid;
  width: ${(p) => (p.$big ? 82 : 68)}px;
  margin-left: ${(p) => (p.$big ? 8 : 4)}px;
  font-size: ${(p) => (p.$big ? 14 : 11)}px;
  line-height: ${(p) => (p.$big ? 22 : 17)}px;
  text-align: center;
`;
const PeekButton = styled.button`
  align-self: stretch;
  width: 15px;
  border: 1px solid rgba(200, 215, 240, .6);
  background: linear-gradient(170deg, rgba(255, 255, 255, .4), rgba(20, 30, 50, .45) 45%, rgba(60, 80, 120, .2));
`;
const OuterBar = styled.footer`
  position: relative;
  display: flex;
  align-items: center;
  height: 48px;
  border-top: 1px solid #0a1a48;
  box-shadow: inset 0 1px 0 #7d9cd4;
  background: linear-gradient(90deg, #1c3870 0, #1b3872 3%, #22448c 6%, #234590 30%, #22468f 50%, #2b57a8 80%, #2a56a6 84%, #213f7c 87%, #2c4c88 92%, #213f7c 100%);
  color: #fff;
`;
const Launch = styled.button<{ $w: number }>`
  display: grid;
  place-items: center;
  width: ${(p) => p.$w}px;
  height: 46px;
  border: 0;
  background: none;
`;
const RunningTask = styled.button`
  display: grid;
  place-items: center;
  width: 66px;
  height: 46px;
  border: 1px solid #aab8d8;
  border-right: 5px double #8c9fcb;
  border-radius: 3px;
  background: linear-gradient(150deg, #aab4cc 0, #66799f 40%, #3a5694 75%);
`;

/* ---------- charts ---------- */

const scopeX = (m: number) => 71 + (m / 12000) * 313;
const X_TICKS = [0, 2000, 4000, 6000, 8000, 10000, 12000];

const GridLines = ({ left, top, w, h, rows }: { left: number; top: number; w: number; h: number; rows: number[] }) => {
  const minor: React.ReactNode[] = [];
  for (let i = 1; i < 48; i++) minor.push(<path key={`v${i}`} d={`M${left + (w * i) / 48} ${top}v${h}`} stroke="#062e0a" />);
  for (let i = 1; i < 21; i++) minor.push(<path key={`h${i}`} d={`M${left} ${top + i * 5}h${w}`} stroke="#062e0a" />);
  return (
    <g shapeRendering="crispEdges">
      <rect x={left} y={top} width={w} height={h} fill="#000" />
      {minor}
      {[1, 2, 3, 4, 5].map((i) => <path key={i} d={`M${left + (w * i) / 6} ${top}v${h}`} stroke="#125a18" />)}
      {rows.map((y) => <path key={y} d={`M${left} ${y}h${w}`} stroke="#125a18" />)}
      <path d={`M${left - 1} ${top + h}V${top - 1}h${w + 1}`} fill="none" stroke="#55503f" />
      <path d={`M${left} ${top + h}h${w}V${top}`} fill="none" stroke="#eee" />
    </g>
  );
};

const PROFILE: [number, number][] = [[0, 0.995], [60, 1.155], [150, 1.17], [280, 1.195], [400, 1.2], [470, 1.17], [520, 1.145], [600, 1.13], [720, 1.11], [800, 1.08], [880, 1.058], [1000, 1.042], [1150, 1.032], [1350, 1.023], [1700, 1.019], [2100, 1.012], [3000, 1.009], [4500, 1.006], [12000, 1.005]];
const aTrace = (() => {
  const pts: string[] = [];
  for (let i = 0; i <= 420; i++) {
    const m = (i / 420) * 12000;
    let v = 1;
    for (let k = 1; k < PROFILE.length; k++)
      if (m <= PROFILE[k][0]) {
        const [m0, v0] = PROFILE[k - 1];
        const [m1, v1] = PROFILE[k];
        v = v0 + ((v1 - v0) * (m - m0)) / (m1 - m0);
        break;
      }
    v += (hash(i, 5, 77) - 0.5) * (m < 1000 ? 0.008 : 0.018);
    pts.push(`${scopeX(m)},${clamp(112 - ((v - 0.99) / 0.21) * 102, 10, 111)}`);
  }
  return pts.join(" ");
})();

const AScope = () => (
  <ScopePlate>
    <svg width="408" height="151" viewBox="0 0 408 151" role="img" aria-label="A-scope">
      <GridLines left={71} top={8} w={313} h={104} rows={[34, 58, 82, 107]} />
      <path d="M250.500 8v104" stroke="#d8d060" />
      <polyline points={aTrace} fill="none" stroke="#fff" strokeWidth="1.500" />
      {[["1.20", 9], ["1.15", 33], ["1.10", 58], ["1.05", 82], ["0.99", 111]].map(([t, y]) => (
        <g key={t}><Axis x="62" y={+y + 4} textAnchor="end">{t}</Axis><path d={`M64 ${+y + 0.5}h5`} stroke="#000" /></g>
      ))}
      {X_TICKS.map((m) => (
        <g key={m}><path d={`M${scopeX(m)} 114v4`} stroke="#000" /><Axis x={scopeX(m)} y="130" textAnchor="middle">{m}</Axis></g>
      ))}
      <AxisTitle x="225" y="147">Range (m)</AxisTitle>
      <AxisTitle transform="translate(34 60) rotate(-90)">A-scope</AxisTitle>
    </svg>
  </ScopePlate>
);

/* x, width, lower end of each gap in the upper half of the saturated trace (plot pixels) */
const UPPER: [number, number, number][] = [[81, 3, 24], [84, 1, 50], [91, 1, 34], [95, 2, 54], [103, 2, 14], [104, 1, 44], [114, 1, 50], [125, 1, 38], [129, 1, 8], [132, 1, 57], [144, 1, 64], [148, 1, 102], [159, 1, 55], [183, 1, 54], [195, 1, 27], [206, 1, 10], [207, 2, 54], [223, 2, 38], [225, 1, 27], [239, 2, 50], [248, 1, 47], [250, 1, 8], [266, 3, 42], [288, 1, 52], [300, 1, 37]];
/* x, width, upper end of each gap in the lower half */
const LOWER: [number, number, number][] = [[83, 5, 67], [91, 1, 64], [95, 1, 64], [97, 1, 70], [103, 1, 99], [114, 1, 62], [118, 1, 62], [125, 1, 71], [132, 2, 59], [137, 1, 65], [144, 1, 64], [147, 1, 62], [155, 1, 56], [161, 1, 64], [168, 1, 67], [170, 1, 66], [177, 2, 67], [182, 1, 61], [191, 1, 67], [194, 1, 71], [196, 1, 67], [207, 1, 64], [213, 1, 61], [215, 1, 66], [219, 1, 51], [224, 3, 66], [227, 1, 64], [230, 1, 69], [239, 4, 66], [245, 1, 61], [248, 1, 48], [254, 1, 66], [267, 1, 54], [283, 1, 69], [286, 1, 72], [295, 1, 67], [301, 1, 64]];

const velTrace = (() => {
  const pts: string[] = ["0,104", "1,48"];
  for (let i = 2; i <= 82; i++) {
    const base = i < 12 ? 46 : i < 34 ? 46 + (i - 12) * 0.18 : i < 44 ? 48 - (i - 34) * 0.2 : 46 + (i - 44) * 0.3;
    const amp = i < 20 ? 1 : i < 38 ? 4 : i < 50 ? 9 : 19;
    pts.push(`${i},${base + (hash(i, 8, 90) - 0.5) * amp}`, `${i + 0.5},${base + (hash(i, 9, 90) - 0.5) * amp}`);
  }
  return pts.join(" ");
})();

const VelocityScope = () => (
  <ScopePlate>
    <svg width="408" height="151" viewBox="0 0 408 151" role="img" aria-label="Velocity">
      <GridLines left={76} top={8} w={308} h={104} rows={[34, 60, 85]} />
      <g transform="translate(76 8)" shapeRendering="crispEdges">
        <path d="M65 0h1v104h-1zM72 0h1v104h-1z" fill="#fff" />
        <path d="M80 20h1v84h-1zM81 0h227v104H81z" fill="#fff" />
        {UPPER.map(([x, w, y], i) => <rect key={i} x={x} y="0" width={w} height={y} fill={i % 5 === 1 ? "#0b4a10" : "#000"} />)}
        {LOWER.map(([x, w, y], i) => <rect key={i} x={x} y={y} width={w} height={104 - y} fill={i % 7 === 3 ? "#0b4a10" : "#000"} />)}
      </g>
      <g transform="translate(76 8)"><polyline points={velTrace} fill="none" stroke="#fff" strokeWidth="1.500" /></g>
      {[["5.00", 9], ["2.50", 34], ["0.00", 60], ["-2.50", 85], ["-5.00", 111]].map(([t, y]) => (
        <g key={t}><Axis x="67" y={+y + 4} textAnchor="end">{t}</Axis><path d={`M69 ${+y + 0.5}h5`} stroke="#000" /></g>
      ))}
      {X_TICKS.map((m) => (
        <g key={m}><path d={`M${76 + (m / 12000) * 308} 114v4`} stroke="#000" /><Axis x={76 + (m / 12000) * 308} y="130" textAnchor="middle">{m}</Axis></g>
      ))}
      <AxisTitle x="228" y="147">Range (m)</AxisTitle>
      <AxisTitle transform="translate(34 58) rotate(-90)">Velocity (m/s)</AxisTitle>
    </svg>
  </ScopePlate>
);

const RANGE = [5000, 4500, 4000, 3500, 3000, 2500, 2000, 1500, 1000, 500, 0];

const HeatMap = ({ cell, name, pointer }: { cell: Cell; name: string; pointer?: boolean }) => {
  const ref = useRef<HTMLCanvasElement>(null);
  useLayoutEffect(() => {
    const canvas = ref.current;
    const ctx = canvas?.getContext("2d");
    if (!canvas || !ctx) return;
    const { width, height } = canvas;
    const img = ctx.createImageData(width, height);
    for (let r = 0; r < height; r++)
      for (let c = 0; c < width; c++) {
        const [red, green, blue] = cell(c, r, width, height);
        img.data.set([red, green, blue, 255], (r * width + c) * 4);
      }
    ctx.putImageData(img, 0, 0);
  }, [cell]);
  return (
    <MapPlate>
      <VerticalTitle>Range (m)</VerticalTitle>
      <TickColumn>{RANGE.map((v) => <Tick key={v}>{v}</Tick>)}</TickColumn>
      <MapArea>
        <MapCanvas ref={ref} width={478} height={166} role="img" aria-label={name} />
        {pointer && (
          <Pointer width="14" height="22" viewBox="0 0 14 22"><path d="M1 1v16l4-4 3 7 3-1-3-7h5z" fill="#fff" stroke="#000" /></Pointer>
        )}
      </MapArea>
      <XLabels><XLabel>1314682</XLabel><XLabel>1315181</XLabel></XLabels>
    </MapPlate>
  );
};

const Scale = ({ ticks, title, doppler }: { ticks: string[]; title: string; doppler?: boolean }) => (
  <>
    <ScaleBar $doppler={doppler} />
    <ScaleTicks>{ticks.map((t) => <ScaleTick key={t}>{t}</ScaleTick>)}</ScaleTicks>
    <ScaleTitle><VerticalTitle $down>{title}</VerticalTitle></ScaleTitle>
  </>
);

const Spinner = ({ name }: { name: string }) => (
  <SpinBox>
    <SpinButton aria-label={`Increase ${name}`}><svg width="6" height="5" viewBox="0 0 6 5"><path d="m1 4 2-3 2 3z" fill="none" stroke="#333" /></svg></SpinButton>
    <SpinButton aria-label={`Decrease ${name}`}><svg width="6" height="5" viewBox="0 0 6 5"><path d="m1 1 2 3 2-3z" fill="none" stroke="#333" /></svg></SpinButton>
  </SpinBox>
);

const PathEntry = ({ id, value, on, label }: { id: string; value: string; on?: boolean; label: string }) => (
  <PathRow>
    <Drive aria-label={`${label} drive`}>C</Drive>
    <PathGlyph><svg width="8" height="12" viewBox="0 0 8 12"><path d="M1.500 1.500h3v3h-3zM4.500 7.500h3v3h-3z" fill="#fff" stroke="#000" /><path d="M2.500 5v4H4" fill="none" stroke="#000" /></svg></PathGlyph>
    <PathField id={id} aria-label={label} defaultValue={value} $w={340} $h={22} $kind="path" />
    <Toggle $on={on} aria-pressed={!!on}>
      {on ? "ON" : "OFF"}
      <svg width="11" height="13" viewBox="0 0 11 13"><path d="M0 0q9 1 11 6-2 6-11 7z" fill={on ? "#4df01c" : "#1c4a14"} /></svg>
    </Toggle>
  </PathRow>
);

const ICONS: [string, React.ReactNode][] = [
  ["Recycle Bin", <RecycleBin />],
  ["BL-View", <BlView />],
  ["Google\nChrome", <Chrome size={60} shortcut />],
  ["MW41", <Mw41 />],
  ["Wind Lidar\nSoftware", <WindLidar />],
  ["AutoScreen...", <ZipFolder />],
  ["Auto Screen\nCapture", <AutoCapture />],
];
const IconLabel = styled.span`
  white-space: pre-line;
`;

export default function App() {
  return (
    <Desktop>
      <Global />
      <Wallpaper viewBox="0 0 1920 1080" preserveAspectRatio="none" aria-hidden="true">
        <defs>
          <radialGradient id="glow" cx=".82" cy="0" r=".34" gradientTransform="translate(0 0) scale(1.1 .75)"><stop offset="0" stopColor="#3b86f6" /><stop offset=".5" stopColor="#1f6cec" stopOpacity=".7" /><stop offset="1" stopColor="#0038b4" stopOpacity="0" /></radialGradient>
          <linearGradient id="floor" x1="0" y1="0" x2="0" y2="1"><stop offset=".72" stopColor="#0552d0" stopOpacity="0" /><stop offset="1" stopColor="#0552d0" /></linearGradient>
          <linearGradient id="side" x1="0" y1="0" x2="1" y2="0"><stop offset=".15" stopColor="#fff" stopOpacity="0" /><stop offset=".8" stopColor="#fff" /></linearGradient>
          <mask id="fade"><rect width="1920" height="1080" fill="url(#side)" /></mask>
          <filter id="soft"><feGaussianBlur stdDeviation="5" /></filter>
        </defs>
        <rect width="1920" height="1080" fill="#0038b4" />
        <rect width="1920" height="1080" fill="url(#floor)" mask="url(#fade)" />
        <rect width="1920" height="1080" fill="url(#glow)" />
        <g fill="none" filter="url(#soft)">
          <path d="M0 545Q130 655 260 755" stroke="#0850c8" strokeWidth="18" opacity=".6" />
          <path d="M0 133Q130 140 260 185" stroke="#0a4cc4" strokeWidth="10" opacity=".5" />
          <path d="M60 215Q160 217 260 214" stroke="#0a4cc4" strokeWidth="5" opacity=".5" />
          <path d="M1690 318Q1820 290 1930 220" stroke="#0a54d0" strokeWidth="18" opacity=".6" />
          <path d="M1690 612Q1800 540 1930 420" stroke="#0a58d0" strokeWidth="12" opacity=".7" />
          <path d="M1690 782Q1800 762 1930 755" stroke="#0a54d0" strokeWidth="4" opacity=".6" />
        </g>
      </Wallpaper>

      <Workspace>
        <IconColumn aria-label="Desktop">
          {ICONS.map(([label, icon]) => <DesktopIcon key={label}>{icon}<IconLabel>{label}</IconLabel></DesktopIcon>)}
        </IconColumn>

        <WindowFrame>
          <WindowTitle>
            <Caption><RemoteDesktop size={20} />192.168.0.150 - Remote Desktop Connection</Caption>
            <CaptionButtons>
              <CaptionButton aria-label="Minimize"><svg width="18" height="16" viewBox="0 0 18 16"><rect x=".5" y="10.500" width="16" height="4" fill="#fff" stroke="#4b5a78" /></svg></CaptionButton>
              <CaptionButton aria-label="Maximize"><svg width="18" height="14" viewBox="0 0 18 14"><path d="M.5.5h17v13H.5zM5.500 4.500v5h7v-5z" fill="#fff" stroke="#4b5a78" fillRule="evenodd" /></svg></CaptionButton>
              <CaptionButton $wide aria-label="Close"><svg width="16" height="14" viewBox="0 0 16 14"><path d="M1 1h4l3 3 3-3h4l-5 6 5 6h-4l-3-3-3 3H1l5-6z" fill="#fff" stroke="#4b5a78" /></svg></CaptionButton>
            </CaptionButtons>
          </WindowTitle>
          <Client>
            <MdiTitle>
              <ViGlyph size={16} />StreamLine XR v14-6.vi
              <MdiButtons>
                <MdiButton aria-label="Minimize document"><svg width="11" height="9" viewBox="0 0 11 9"><rect x=".5" y="4.500" width="10" height="4" rx="1" fill="#fff" stroke="#555" /></svg></MdiButton>
                <MdiButton aria-label="Restore document"><svg width="13" height="11" viewBox="0 0 13 11"><path d="M4.500.5h8v6h-8zM.5 3.500h8v7h-8zM3.500 6.500h2v1h-2z" fill="#fff" stroke="#555" /></svg></MdiButton>
                <MdiButton aria-label="Close document"><svg width="12" height="10" viewBox="0 0 16 14"><path d="M1 1h4l3 3 3-3h4l-5 6 5 6h-4l-3-3-3 3H1l5-6z" fill="#fff" stroke="#444" strokeWidth="1.500" /></svg></MdiButton>
              </MdiButtons>
            </MdiTitle>
            <Tabs role="tablist">
              <Tab role="tab" $w={99}>System setup</Tab>
              <Tab role="tab" $w={112} $active aria-selected>Real time data</Tab>
              <Tab role="tab" $w={116}>Temp/humidity</Tab>
              <Tab role="tab" $w={88}>Scheduling</Tab>
              <Tab role="tab" $w={98}>Wind profile</Tab>
            </Tabs>
            <TabPage role="tabpanel">
              <BlueBezel>
                <Panel>
                  <Left>
                    <AScope />
                    <ControlBox>
                      <BackgroundCell>
                        <Row $gap={1}><PanelButton $w={188} $h={36}>Renew background now</PanelButton><Led /></Row>
                        <Row $pad="5px 0 0 10px">
                          <BoldLabel htmlFor="rays">Rays in background</BoldLabel>
                          <Spinner name="rays" />
                          <Field id="rays" defaultValue="8" $w={28} $h={23} $kind="amber" />
                        </Row>
                      </BackgroundCell>
                      <SnrCell>
                        <Row>
                          <BoldLabel htmlFor="snr">Display SNR threshold</BoldLabel>
                          <Spinner name="threshold" />
                          <Field id="snr" defaultValue="1.002" $w={43} $h={23} $kind="amber" />
                        </Row>
                      </SnrCell>
                      <ScannerCell>
                        <Title>Scanner position</Title>
                        <Row $pad="10px 0 0 16px"><BigLabel htmlFor="az">AZ</BigLabel><Field id="az" defaultValue="089.999" $w={93} $h={32} $kind="big" /></Row>
                        <Row $pad="16px 0 0 16px"><BigLabel htmlFor="el">EL</BigLabel><Field id="el" defaultValue="090.000" $w={93} $h={32} $kind="big" /></Row>
                      </ScannerCell>
                    </ControlBox>
                    <VelocityScope />
                    <LoggingBox>
                      <LoggingHead>
                        <div>
                          <Title>Data Logging</Title>
                          <Row $pad="4px 0 0 3px"><BoldLabel htmlFor="proc">Processed Data file</BoldLabel></Row>
                        </div>
                        <Row $pad="9px 0 0"><PanelButton $w={134} $h={24} $bold>Restart processed file</PanelButton></Row>
                        <Row $pad="4px 0 0 91px"><Title>Logging</Title></Row>
                      </LoggingHead>
                      <PathEntry id="proc" label="Processed Data file path" value="C:\Lidar\Data\Proc\2023\202308\20230810\Stare_122_20230810_08.hpl" on />
                      <Row $pad="0 0 0 15px"><BoldLabel htmlFor="raw">RAW Data file</BoldLabel></Row>
                      <PathEntry id="raw" label="RAW Data file path" value="" />
                    </LoggingBox>
                    <FooterButtons>
                      <PanelButton $w={100} $h={48} $red>{"STOP\nsoftware"}</PanelButton>
                      <PanelButton $w={116} $h={48}>{"Change LiDAR\nSettings"}</PanelButton>
                    </FooterButtons>
                  </Left>
                  <Right>
                    <PlotHeading><HeadingText>Backscatter</HeadingText></PlotHeading>
                    <PlotRow>
                      <HeatMap cell={backscatterCell} name="Backscatter" />
                      <Scale ticks={["-3.0", "-5.5", "-8.0"]} title="log B (/m/sr)" />
                    </PlotRow>
                    <PlotHeading>
                      <HeadingText>Doppler</HeadingText>
                      <Row>
                        <BoldLabel htmlFor="avg">Average number</BoldLabel>
                        <Field id="avg" defaultValue="1" $w={28} $h={21} $kind="grey" />
                        <BoldLabel htmlFor="avgof">of</BoldLabel>
                        <Field id="avgof" defaultValue="1" $w={28} $h={21} $kind="grey" />
                      </Row>
                      <Row $gap={12} $pad="0 0 0 104px">
                        <BoldLabel htmlFor="mode">Backscatter</BoldLabel>
                        <Lever id="mode" aria-label="Backscatter mode">
                          <svg width="26" height="16" viewBox="0 0 26 16"><ellipse cx="12" cy="14" rx="5" ry="2" fill="#6b5f42" /><circle cx="19" cy="8" r="7" fill="#b0a890" /><rect x="5" y="3" width="17" height="10" rx="4" fill="#3a3a3a" /><circle cx="5" cy="8" r="4" fill="#eee" /></svg>
                        </Lever>
                      </Row>
                    </PlotHeading>
                    <PlotRow>
                      <HeatMap cell={dopplerCell} name="Doppler" pointer />
                      <Scale ticks={["4.0", "0.0", "-4.0"]} title="Velocity (m/s)" doppler />
                    </PlotRow>
                  </Right>
                </Panel>
              </BlueBezel>
            </TabPage>
            <InnerPreview><ViGlyph size={16} />StreamLine XR v14-6.vi</InnerPreview>
            <InnerBar>
              <StartButton $w={57} aria-label="Remote start"><Orb size={36} /></StartButton>
              <TaskButton $look="stack" aria-label="Notepad"><Notepad /></TaskButton>
              <TaskButton aria-label="Control Panel"><ControlPanel /></TaskButton>
              <TaskButton aria-label="Sticky Notes"><StickyNotes /></TaskButton>
              <TaskButton aria-label="Power"><PowerTile /></TaskButton>
              <TaskButton $look="active" aria-label="StreamLine XR"><ViGlyph size={34} label /></TaskButton>
              <TaskButton aria-label="Command Prompt"><Cmd /></TaskButton>
              <TaskButton aria-label="Scan scheduler"><ScanSched /></TaskButton>
              <TaskButton $look="progress" aria-label="Remote Explorer"><Explorer size={32} /></TaskButton>
              <Tray $gap={6}>
                <TrayArrow /><TrayVolume /><TrayFlag />
                <Clock>08:50<span>10/08/2023</span></Clock>
                <PeekButton aria-label="Show remote desktop" />
              </Tray>
            </InnerBar>
          </Client>
        </WindowFrame>
      </Workspace>

      <OuterBar>
        <StartButton $w={66} aria-label="Start"><Orb size={44} /></StartButton>
        <Launch $w={76} aria-label="Internet Explorer"><InternetExplorer /></Launch>
        <Launch $w={66} aria-label="Windows Explorer"><Explorer size={40} /></Launch>
        <Launch $w={68} aria-label="Media Player"><MediaPlayer /></Launch>
        <Launch $w={76} aria-label="Google Chrome"><Chrome size={40} /></Launch>
        <RunningTask aria-label="Remote Desktop Connection"><RemoteDesktop size={40} /></RunningTask>
        <Tray $gap={10}>
          <TrayArrow />
          <Tray $gap={10} $lead={8}><TrayFlag error /><TrayBattery /><TrayNetwork /><TrayVolume muted /></Tray>
          <Clock $big>08:50<span>10/08/2023</span></Clock>
          <PeekButton aria-label="Show desktop" />
        </Tray>
      </OuterBar>
    </Desktop>
  );
}
